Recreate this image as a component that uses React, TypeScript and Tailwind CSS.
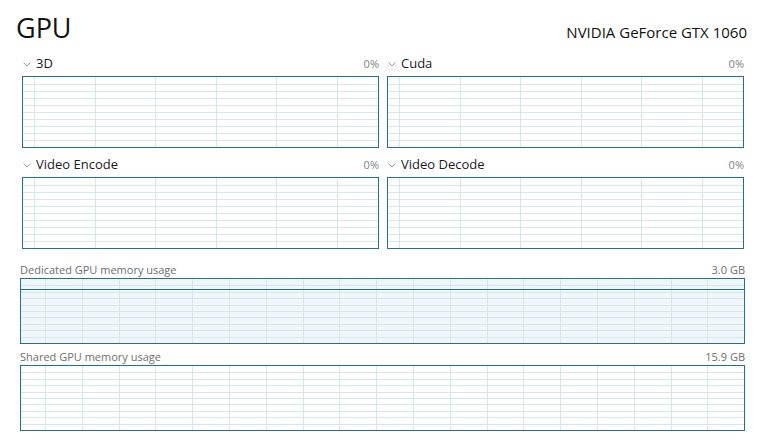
import React from "react";

const FONT = "font-['Open_Sans','Noto_Sans',sans-serif]";

// faint grid inside a graph box; lines are computed from the box size
const GridLines: React.FC<{
  w: number;
  h: number;
  colStep: number;
  colOffset: number;
  rows: number;
}> = ({ w, h, colStep, colOffset, rows }) => {
  const cols: number[] = [];
  for (let x = colOffset; x < w; x += colStep) cols.push(Math.round(x) + 0.5);
  const rowLines: number[] = [];
  for (let i = 1; i < rows; i++) rowLines.push(Math.round((h / rows) * i) + 0.5);

  return (
    <svg className="absolute inset-0" width={w} height={h}>
      {rowLines.map((y) => (
        <line key={"r" + y} x1={0} x2={w} y1={y} y2={y} stroke="#d9e5ec" strokeWidth={1} />
      ))}
      {cols.map((x) => (
        <line key={"c" + x} x1={x} x2={x} y1={0} y2={h} stroke="#d9e5ec" strokeWidth={1} />
      ))}
    </svg>
  );
};

const Chevron: React.FC = () => (
  <svg width="8" height="5" viewBox="0 0 8 5" className="mr-[5px] mt-[1px]">
    <polyline points="0.5,0.5 4,4 7.5,0.5" fill="none" stroke="#9a9a9a" strokeWidth="1" />
  </svg>
);

const EngineGraph: React.FC<{ title: string; value: string }> = ({ title, value }) => (
  <div className="flex flex-col">
    <div className="flex h-[20px] items-center justify-between">
      <div className="flex items-center pl-[1px]">
        <Chevron />
        <span className="text-[13px] text-[#1a1a1a]">{title}</span>
      </div>
      <span className="text-[11px] text-[#808080]">{value}</span>
    </div>
    <div className="relative mt-[2px] h-[72px] border border-[#26708f] bg-white overflow-hidden">
      <GridLines w={355} h={70} colStep={60.5} colOffset={11} rows={10} />
    </div>
  </div>
);

const MemoryGraph: React.FC<{ title: string; value: string; fill?: boolean }> = ({
  title,
  value,
  fill,
}) => (
  <div className="flex flex-col">
    <div className="flex h-[14px] items-center justify-between">
      <span className="text-[11px] text-[#6e6e6e]">{title}</span>
      <span className="text-[11px] text-[#6e6e6e]">{value}</span>
    </div>
    <div
      className={
        fill
          ? "relative mt-[1px] h-[66px] border border-[#26708f] bg-[#eff7fb] overflow-hidden"
          : "relative mt-[1px] h-[66px] border border-[#26708f] bg-white overflow-hidden"
      }
    >
      <GridLines w={723} h={64} colStep={36.8} colOffset={24} rows={10} />
      {fill && <div className="absolute left-0 right-0 top-[10px] h-[1px] bg-[#26708f]" />}
    </div>
  </div>
);

export default function App() {
  return (
    <div className={`w-[761px] h-[441px] bg-white overflow-hidden ${FONT}`}>
      {/* Header */}
      <div className="flex items-baseline justify-between pl-[16px] pr-[14px] pt-[10px]">
        <span className="text-[27px] leading-[36px] font-normal text-[#111]">GPU</span>
        <span className="text-[15px] text-[#111]">NVIDIA GeForce GTX 1060</span>
      </div>

      <div className="pl-[20px] pr-[16px]">
        {/* Engine graphs */}
        <div className="mt-[8px] grid grid-cols-2 gap-x-[8px] gap-y-[7px] pl-[2px] pr-[1px]">
          <EngineGraph title="3D" value="0%" />
          <EngineGraph title="Cuda" value="0%" />
          <EngineGraph title="Video Encode" value="0%" />
          <EngineGraph title="Video Decode" value="0%" />
        </div>

        {/* Memory graphs */}
        <div className="mt-[14px] flex flex-col gap-[6px]">
          <MemoryGraph title="Dedicated GPU memory usage" value="3.0 GB" fill />
          <MemoryGraph title="Shared GPU memory usage" value="15.9 GB" />
        </div>
      </div>
    </div>
  );
}
